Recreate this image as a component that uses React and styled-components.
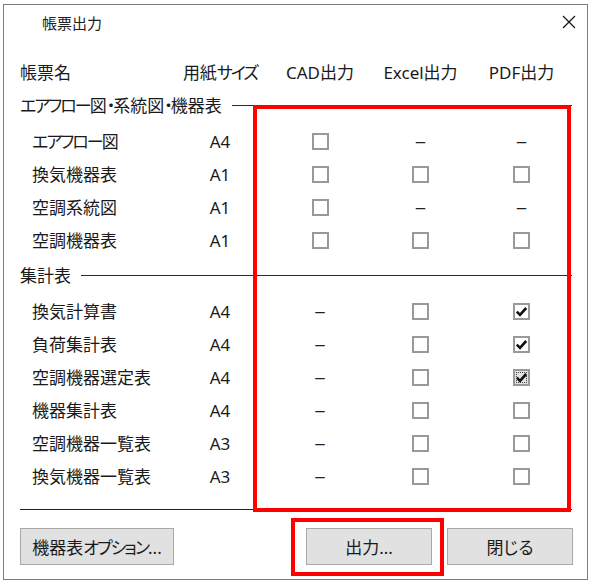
import React from 'react';
import styled, { createGlobalStyle } from 'styled-components';

const GlobalStyle = createGlobalStyle`
  html, body {
    margin: 0;
    padding: 0;
    background: #fff;
  }
  body {
    font-family: "Noto Sans", "Noto Sans CJK JP", sans-serif;
    font-feature-settings: "palt";
    color: #1a1a1a;
  }
`;

const Window = styled.div`
  position: relative;
  margin: 4px 0 0 3px;
  width: 585px;
  height: 576px;
  box-sizing: border-box;
  border: 1px solid #7c7c7c;
  background: #fff;
  display: flex;
  flex-direction: column;
`;

const TitleBar = styled.div`
  display: flex;
  align-items: center;
  height: 34px;
  padding-left: 38px;
`;

const Title = styled.div`
  flex: 1;
  font-size: 15px;
  color: #222;
`;

const CloseButton = styled.button`
  width: 36px;
  height: 34px;
  border: none;
  background: transparent;
  padding: 0;
  display: flex;
  align-items: center;
  justify-content: center;
`;

const Body = styled.div`
  flex: 1;
  display: flex;
  flex-direction: column;
  padding: 17px 15px 14px 16px;
`;

const Row = styled.div`
  display: grid;
  grid-template-columns: 150px 100px 100px 101px 101px;
  height: 33px;
  align-items: center;
  font-size: 17px;
  line-height: 33px;
  margin-top: ${p => p.$gapTop || 0}px;
  margin-bottom: ${p => p.$gapBottom || 0}px;
`;

const Cell = styled.div`
  display: flex;
  justify-content: center;
  align-items: center;
  white-space: nowrap;
`;

const NameCell = styled.div`
  padding-left: ${p => (p.$indent ? 12 : 0)}px;
  white-space: nowrap;
`;

const Section = styled.div`
  grid-column: 1 / -1;
  display: flex;
  align-items: center;
  gap: 10px;
  white-space: nowrap;
`;

const Rule = styled.div`
  flex: 1;
  height: 1px;
  background: #2a2a2a;
`;

// katakana in the reference font are set much narrower than in Noto
const KanaRun = styled.span`
  letter-spacing: -2px;
`;

const Dash = styled.span`
  font-family: "Liberation Sans", sans-serif;
  color: #222;
  font-size: 17px;
`;

const Box = styled.span`
  width: 17px;
  height: 17px;
  box-sizing: border-box;
  border: 2px solid #999;
  background: ${p => (p.$focus ? '#e2e2e2' : '#fff')};
  outline: ${p => (p.$focus ? '1px dotted #444' : 'none')};
  outline-offset: -4px;
  display: inline-flex;
  align-items: center;
  justify-content: center;
`;

const Separator = styled.div`
  height: 1px;
  background: #222;
  margin-top: 16px;
`;

const Footer = styled.div`
  display: flex;
  justify-content: space-between;
  margin-top: 18px;
`;

const ButtonGroup = styled.div`
  display: flex;
  gap: 15px;
  margin-right: -1px;
`;

const Button = styled.button`
  width: ${p => p.$w}px;
  height: 37px;
  box-sizing: border-box;
  border: 1px solid #a8a8a8;
  background: #e1e1e1;
  font-family: inherit;
  font-feature-settings: "palt";
  font-size: 17px;
  color: #1a1a1a;
  padding: 0;
`;

const Highlight = styled.div`
  position: absolute;
  box-sizing: border-box;
  border: 4px solid #ff0000;
  pointer-events: none;
  left: ${p => p.$x}px;
  top: ${p => p.$y}px;
  width: ${p => p.$w}px;
  height: ${p => p.$h}px;
`;

const Txt = ({ children }) =>
  children.split(/([ァ-ヶー・]+)/).map((part, i) =>
    i % 2 ? <KanaRun key={i}>{part}</KanaRun> : part
  );

const Check = ({ checked, focus }) => (
  <Box $focus={focus}>
    {checked ? (
      <svg width="13" height="13" viewBox="0 0 13 13">
        <path d="M1.8 6.6 L5 9.8 L11.2 3" fill="none" stroke="#111" strokeWidth="2.6" />
      </svg>
    ) : null}
  </Box>
);

const Value = ({ v }) => {
  if (v === '-') return <Dash>–</Dash>;
  if (v === 'x') return <Check checked />;
  if (v === 'f') return <Check checked focus />;
  return <Check />;
};

const groups = [
  {
    title: 'エアフロー図・系統図・機器表',
    gapTop: 0,
    rows: [
      ['エアフロー図', 'A4', 'o', '-', '-'],
      ['換気機器表', 'A1', 'o', 'o', 'o'],
      ['空調系統図', 'A1', 'o', '-', '-'],
      ['空調機器表', 'A1', 'o', 'o', 'o'],
    ],
  },
  {
    title: '集計表',
    gapTop: 2,
    rows: [
      ['換気計算書', 'A4', '-', 'o', 'x'],
      ['負荷集計表', 'A4', '-', 'o', 'x'],
      ['空調機器選定表', 'A4', '-', 'o', 'f'],
      ['機器集計表', 'A4', '-', 'o', 'o'],
      ['空調機器一覧表', 'A3', '-', 'o', 'o'],
      ['換気機器一覧表', 'A3', '-', 'o', 'o'],
    ],
  },
];

export default function App() {
  return (
    <>
      <GlobalStyle />
      <Window>
        <TitleBar>
          <Title>帳票出力</Title>
          <CloseButton title="close">
            <svg width="14" height="14" viewBox="0 0 14 14">
              <path d="M1 1 L13 13 M13 1 L1 13" stroke="#111" strokeWidth="1.2" />
            </svg>
          </CloseButton>
        </TitleBar>
        <Body>
          <Row>
            <NameCell>帳票名</NameCell>
            <Cell><Txt>用紙サイズ</Txt></Cell>
            <Cell>CAD出力</Cell>
            <Cell>Excel出力</Cell>
            <Cell>PDF出力</Cell>
          </Row>
          {groups.map(g => (
            <React.Fragment key={g.title}>
              <Row $gapTop={g.gapTop} $gapBottom={3}>
                <Section>
                  <span><Txt>{g.title}</Txt></span>
                  <Rule />
                </Section>
              </Row>
              {g.rows.map(([name, size, cad, xls, pdf]) => (
                <Row key={name}>
                  <NameCell $indent><Txt>{name}</Txt></NameCell>
                  <Cell>{size}</Cell>
                  <Cell><Value v={cad} /></Cell>
                  <Cell><Value v={xls} /></Cell>
                  <Cell><Value v={pdf} /></Cell>
                </Row>
              ))}
            </React.Fragment>
          ))}
          <Separator />
          <Footer>
            <Button $w={154}>機器表<Txt>オプション</Txt>...</Button>
            <ButtonGroup>
              <Button $w={126}>出力...</Button>
              <Button $w={126}>閉じる</Button>
            </ButtonGroup>
          </Footer>
        </Body>
        <Highlight $x={249} $y={100} $w={318} $h={407} />
        <Highlight $x={287} $y={513} $w={153} $h={58} />
      </Window>
    </>
  );
}
